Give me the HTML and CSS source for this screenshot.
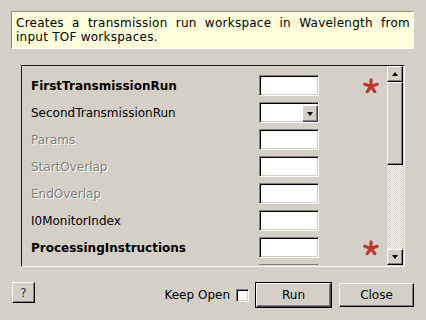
FILE: index.html
```html
<!DOCTYPE html>
<html lang="en">
<head>
  <meta charset="UTF-8" />
  <meta name="viewport" content="width=device-width, initial-scale=1.0" />
  <title>CreateTransmissionWorkspace input dialog</title>
  <link rel="stylesheet" href="styles.css">
</head>
<body>
  <div class="dialog">
    <div class="description">Creates a transmission run workspace in Wavelength from input TOF workspaces.</div>

    <div class="panel">
      <div class="props">
        <div class="row">
          <span class="label bold">FirstTransmissionRun</span>
          <span class="field"></span>
          <svg class="star" width="16" height="16" viewBox="0 0 16 16">
            <g stroke="#b83a2c" stroke-width="3.2" stroke-linecap="round">
              <line x1="8" y1="8.5" x2="8" y2="1.8" />
              <line x1="8" y1="8.5" x2="14.2" y2="6.3" />
              <line x1="8" y1="8.5" x2="11.8" y2="13.6" />
              <line x1="8" y1="8.5" x2="4.2" y2="13.6" />
              <line x1="8" y1="8.5" x2="1.8" y2="6.3" />
            </g>
          </svg>
        </div>
        <div class="row">
          <span class="label">SecondTransmissionRun</span>
          <span class="field combo"><span class="drop"><span class="arrow-down"></span></span></span>
        </div>
        <div class="row">
          <span class="label disabled">Params</span>
          <span class="field"></span>
        </div>
        <div class="row">
          <span class="label disabled">StartOverlap</span>
          <span class="field"></span>
        </div>
        <div class="row">
          <span class="label disabled">EndOverlap</span>
          <span class="field"></span>
        </div>
        <div class="row">
          <span class="label">I0MonitorIndex</span>
          <span class="field"></span>
        </div>
        <div class="row">
          <span class="label bold">ProcessingInstructions</span>
          <span class="field"></span>
          <svg class="star" width="16" height="16" viewBox="0 0 16 16">
            <g stroke="#b83a2c" stroke-width="3.2" stroke-linecap="round">
              <line x1="8" y1="8.5" x2="8" y2="1.8" />
              <line x1="8" y1="8.5" x2="14.2" y2="6.3" />
              <line x1="8" y1="8.5" x2="11.8" y2="13.6" />
              <line x1="8" y1="8.5" x2="4.2" y2="13.6" />
              <line x1="8" y1="8.5" x2="1.8" y2="6.3" />
            </g>
          </svg>
        </div>
        <div class="row">
          <span class="label"></span>
          <span class="field"></span>
        </div>
      </div>

      <div class="scrollbar">
        <div class="sb-btn"><span class="arrow-up"></span></div>
        <div class="sb-thumb"></div>
        <div class="sb-track"></div>
        <div class="sb-btn"><span class="arrow-down"></span></div>
      </div>
    </div>

    <div class="buttons">
      <div class="btn help">?</div>
      <div class="spacer"></div>
      <span class="keep">Keep Open</span>
      <span class="checkbox"></span>
      <div class="btn run"><span>Run</span></div>
      <div class="btn close">Close</div>
    </div>
  </div>
</body>
</html>
```

FILE: styles.css
```css
html, body {
  margin: 0;
  padding: 0;
  width: 100%;
  height: 100%;
  overflow: hidden;
  background-color: #d4d0c8;
}

body {
  font-family: "DejaVu Sans", sans-serif;
  font-size: 12px;
  color: #000;
}

.dialog {
  padding: 11px 12px 0 11px;
}

.description {
  height: 28px;
  padding: 4px 3px 4px 4px;
  line-height: 14px;
  letter-spacing: 0.25px;
  text-align: justify;
  background-color: #ffffdc;
  border: 1px solid;
  border-color: #8a8a8a #ffffff #ffffff #8a8a8a;
}

.panel {
  display: flex;
  margin: 16px 9px 0 10px;
  height: 199px;
  padding: 0 1px 1px 0;
  border: 1px solid;
  border-color: #1a1a1a #ffffff #ffffff #1a1a1a;
}

.props {
  flex: 1;
  overflow: hidden;
  padding: 9px 0 0 9px;
  display: flex;
  flex-direction: column;
  gap: 6px;
}

.row {
  display: flex;
  align-items: center;
  height: 21px;
  flex-shrink: 0;
}

.label {
  width: 228px;
  flex-shrink: 0;
  white-space: nowrap;
}

.label.bold {
  font-weight: bold;
}

.label.disabled {
  color: #808080;
  text-shadow: 1px 1px 0 #ffffff;
}

.field {
  position: relative;
  width: 58px;
  height: 19px;
  background: #fff;
  border: 1px solid;
  border-color: #808080 #ffffff #ffffff #808080;
  box-shadow: inset 1px 1px 0 #000, inset -1px -1px 0 #d4d0c8;
  flex-shrink: 0;
}

.drop {
  position: absolute;
  top: 2px;
  right: 1px;
  width: 14px;
  height: 15px;
  background: #d4d0c8;
  border-top: 1px solid #fff;
  border-left: 1px solid #fff;
  box-shadow: 1px 1px 0 #404040, inset -1px -1px 0 #808080;
  display: flex;
  align-items: center;
  justify-content: center;
}

.star {
  margin-left: 44px;
  flex-shrink: 0;
}

.arrow-down,
.arrow-up {
  width: 0;
  height: 0;
  border-left: 3.5px solid transparent;
  border-right: 3.5px solid transparent;
}

.arrow-down {
  border-top: 4px solid #000;
}

.arrow-up {
  border-bottom: 4px solid #000;
}

.scrollbar {
  width: 16px;
  display: flex;
  flex-direction: column;
  flex-shrink: 0;
}

.sb-btn,
.sb-thumb {
  box-sizing: border-box;
  background: #d4d0c8;
  border: 1px solid;
  border-color: #ffffff #000 #000 #ffffff;
  box-shadow: inset -1px -1px 0 #808080;
}

.sb-btn {
  height: 16px;
  display: flex;
  align-items: center;
  justify-content: center;
}

.sb-thumb {
  height: 83px;
}

.sb-track {
  flex: 1;
  background-image: conic-gradient(#ffffff 25%, #d4d0c8 0 50%, #ffffff 0 75%, #d4d0c8 0);
  background-size: 2px 2px;
}

.buttons {
  display: flex;
  align-items: center;
  margin-top: 15px;
  padding-left: 1px;
}

.btn {
  box-sizing: border-box;
  display: flex;
  align-items: center;
  justify-content: center;
  background: #d4d0c8;
  border: 1px solid;
  border-color: #ffffff #000 #000 #ffffff;
  box-shadow: inset -1px -1px 0 #808080;
}

.help {
  align-self: flex-start;
  width: 23px;
  height: 21px;
  color: #333;
}

.spacer {
  flex: 1;
}

.keep {
  margin-right: 6px;
}

.checkbox {
  box-sizing: border-box;
  width: 13px;
  height: 13px;
  background: #fff;
  border: 1px solid;
  border-color: #808080 #ffffff #ffffff #808080;
  box-shadow: inset 1px 1px 0 #000, inset -1px -1px 0 #d4d0c8;
  margin-right: 6px;
}

.run {
  width: 77px;
  height: 26px;
  border: 1px solid #000;
  box-shadow: none;
  padding: 0;
}

.run span {
  box-sizing: border-box;
  width: 100%;
  height: 100%;
  display: flex;
  align-items: center;
  justify-content: center;
  border: 1px solid;
  border-color: #ffffff #404040 #404040 #ffffff;
  box-shadow: inset -1px -1px 0 #808080;
}

.close {
  width: 75px;
  height: 24px;
  margin-left: 7px;
}
```
